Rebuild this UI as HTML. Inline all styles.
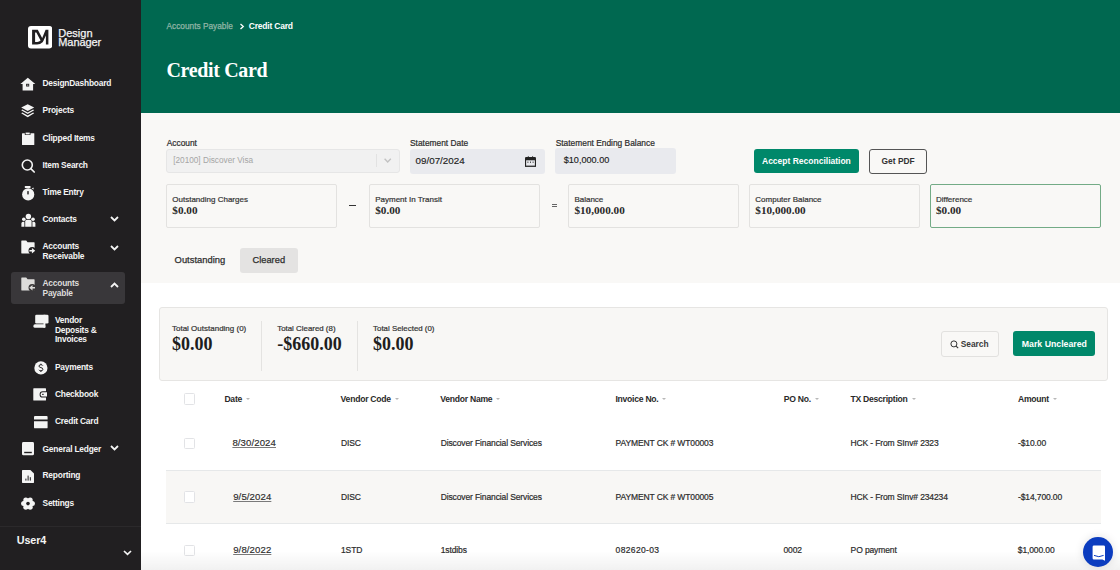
<!DOCTYPE html>
<html><head><meta charset="utf-8">
<style>
*{box-sizing:border-box;margin:0;padding:0}
html,body{width:1120px;height:570px;overflow:hidden;background:#fff;font-family:"Liberation Sans",sans-serif}
.a{position:absolute;white-space:nowrap;line-height:1}
.sb{position:absolute;left:0;top:0;width:141px;height:570px;background:#211f21}
.nav{position:absolute;left:42.5px;color:#f4f4f4;font-weight:700;font-size:8.4px;letter-spacing:-0.2px;line-height:9.6px;white-space:nowrap}
.ic{position:absolute;fill:#f4f4f4}
.chev{position:absolute;width:9px;height:6px}
.hdr{position:absolute;left:141px;top:0;width:979px;height:113px;background:#006850}
.main{position:absolute;left:141px;top:113px;width:979px;height:170px;background:#f9f8f6}
.lbl{position:absolute;font-size:8.4px;color:#2b2b2b;line-height:1;white-space:nowrap;-webkit-text-stroke:0.2px #2b2b2b}
.card{position:absolute;top:184px;height:43.5px;border:1px solid #e3e2e0;border-radius:2px;background:#f9f8f6}
.card .t{position:absolute;left:5px;top:10.5px;font-size:8px;color:#333;line-height:1;white-space:nowrap;-webkit-text-stroke:0.2px #333}
.card .v{position:absolute;left:5px;top:19.5px;font-family:"Liberation Serif",serif;font-weight:700;font-size:11.2px;color:#2a2a2a;line-height:1;white-space:nowrap}
.th{position:absolute;top:395px;font-weight:700;font-size:8.6px;letter-spacing:-0.25px;color:#2a2a2a;line-height:1;white-space:nowrap}
.th i{display:inline-block;width:0;height:0;border-left:2.3px solid transparent;border-right:2.3px solid transparent;border-top:2.5px solid #b8b8b8;margin-left:4px;vertical-align:2px}
.cb{position:absolute;left:183.7px;width:11.2px;height:11.6px;border:1px solid #e2e3e6;border-radius:1.5px;background:#fff}
.td{position:absolute;font-size:8.5px;letter-spacing:-0.12px;color:#2b2b2b;line-height:1;white-space:nowrap;-webkit-text-stroke:0.2px #2b2b2b}
.dt{position:absolute;left:232.4px;font-size:9.6px;letter-spacing:0.1px;color:#2b2b2b;-webkit-text-stroke:0.15px #2b2b2b;line-height:1;white-space:nowrap;text-decoration:underline;text-decoration-color:#7a7a7a;text-decoration-thickness:1px;text-underline-offset:0.5px}
</style></head><body>

<!-- SIDEBAR -->
<div class="sb"></div>

<!-- logo -->
<svg class="a" style="left:27.8px;top:26.4px" width="24.3" height="22.5" viewBox="0 0 24.3 22.5">
<rect x="0" y="0" width="24.3" height="22.5" rx="3" fill="#fff"/>
<path fill-rule="evenodd" d="M4.1 3.7 H9.8 L15.3 14.2 L14.2 16.6 Q12.4 18.6 9.2 18.6 H4.1 Z M7.1 6.4 V15.9 H9.2 Q11.2 15.9 12.6 14.5 L8.3 6.4 Z" fill="#211f21"/>
<path d="M17.6 3.7 H20.4 V18.6 H17.9 V9.4 L14.6 16.6 L13.3 14.3 Z" fill="#211f21"/>
</svg>
<div class="a" style="left:58.3px;top:28px;color:#f4f4f4;font-size:11px;letter-spacing:0px;-webkit-text-stroke:0.25px #f4f4f4">Design</div>
<div class="a" style="left:58.3px;top:37px;color:#f4f4f4;font-size:11px;letter-spacing:-0.1px;-webkit-text-stroke:0.25px #f4f4f4">Manager</div>

<!-- nav icons -->
<svg class="ic" style="left:20px;top:77px" width="16" height="14" viewBox="0 0 16 14"><path d="M7.8 0.7 L15.3 7 H13.1 V13.6 H2.6 V7 H0.4 Z" fill="#f4f4f4"/><rect x="6.1" y="6.8" width="3.1" height="2.7" fill="#211f21"/><rect x="6.9" y="7.6" width="1.5" height="1.1" fill="#aaa"/></svg>
<div class="nav" style="top:79px">DesignDashboard</div>

<svg class="ic" style="left:21px;top:104px" width="14" height="14" viewBox="0 0 14 14"><path d="M6.7 0.2 L13.2 3.6 L6.7 7 L0.2 3.6 Z"/><path d="M1.3 5.6 L6.7 8.5 L12.1 5.6 L13.2 6.3 L6.7 9.9 L0.2 6.3 Z"/><path d="M1.3 8.6 L6.7 11.5 L12.1 8.6 L13.2 9.3 L6.7 13.2 L0.2 9.3 Z"/></svg>
<div class="nav" style="top:106px">Projects</div>

<svg class="ic" style="left:22px;top:132px" width="13" height="14" viewBox="0 0 13 14"><path d="M0 1.8 Q0 1.3 0.5 1.3 H12 Q12.3 1.3 12.3 1.8 V12.6 Q12.3 13.1 11.8 13.1 H0.5 Q0 13.1 0 12.6 Z"/><rect x="2.8" y="0.5" width="5.7" height="2.6" rx="0.6" fill="#211f21"/><rect x="3.6" y="0.6" width="4.1" height="1.8" fill="#f4f4f4"/></svg>
<div class="nav" style="top:134px">Clipped Items</div>

<svg style="position:absolute;left:20px;top:158px" width="16" height="16" viewBox="0 0 16 16"><circle cx="7.3" cy="7" r="5" fill="none" stroke="#f4f4f4" stroke-width="1.6"/><path d="M10.8 10.6 L14.2 14" stroke="#f4f4f4" stroke-width="1.7" stroke-linecap="round"/></svg>
<div class="nav" style="top:161px">Item Search</div>

<svg class="ic" style="left:21px;top:185px" width="14" height="16" viewBox="0 0 14 16"><circle cx="7.2" cy="9.4" r="6.1"/><rect x="3.8" y="1" width="5.7" height="2" rx="0.5"/><path d="M10.6 3.4 L12.4 2.6 L12.8 4.6 Z"/><rect x="6.1" y="6.1" width="1.8" height="3.3" fill="#211f21" opacity="0.8"/></svg>
<div class="nav" style="top:188px">Time Entry</div>

<svg class="ic" style="left:20.5px;top:213px" width="15" height="15" viewBox="0 0 15 15"><circle cx="7.4" cy="3.4" r="2.7"/><path d="M4.2 8.6 Q4.2 6.8 6 6.8 H8.8 Q10.6 6.8 10.6 8.6 V13.8 H4.2 Z"/><circle cx="2.8" cy="6.3" r="1.8"/><circle cx="12" cy="6.3" r="1.8"/><path d="M0.4 10.4 Q0.4 8.7 2 8.7 H3.4 V13.8 H0.4 Z"/><path d="M11.4 8.7 H12.8 Q14.4 8.7 14.4 10.4 V13.8 H11.4 Z"/></svg>
<div class="nav" style="top:215px">Contacts</div>

<svg class="ic" style="left:20.5px;top:240px" width="15" height="15" viewBox="0 0 15 15"><path d="M0.3 1 Q0.3 0.6 0.7 0.6 H5.2 L6.6 2.2 H13 Q13.6 2.2 13.6 2.8 V13 Q13.6 13.4 13.2 13.4 H0.7 Q0.3 13.4 0.3 13 Z"/><circle cx="11.2" cy="10.8" r="3.7" fill="#211f21"/><path d="M8.4 10.1 H10.9 V8 L14.2 10.8 L10.9 13.6 V11.5 H8.4 Z" fill="#f4f4f4"/></svg>
<div class="nav" style="top:242px">Accounts<br>Receivable</div>

<!-- AP active -->
<div class="a" style="left:11px;top:272.3px;width:114px;height:31.5px;background:#39373a;border-radius:3px"></div>
<svg class="ic" style="left:20.5px;top:277px;fill:#dedddb" width="15" height="15" viewBox="0 0 15 15"><path d="M0.3 1 Q0.3 0.6 0.7 0.6 H5.2 L6.6 2.2 H13 Q13.6 2.2 13.6 2.8 V13 Q13.6 13.4 13.2 13.4 H0.7 Q0.3 13.4 0.3 13 Z"/><circle cx="11.2" cy="10.8" r="3.7" fill="#3b393a"/><path d="M14 10.1 H11.5 V8 L8.2 10.8 L11.5 13.6 V11.5 H14 Z" fill="#dedddb"/></svg>
<div class="nav" style="top:279px;color:#dedddb">Accounts<br>Payable</div>

<svg class="ic" style="left:32.5px;top:313.5px" width="16" height="15" viewBox="0 0 16 15"><rect x="2.2" y="0.8" width="13.3" height="8.8" rx="1.3"/><rect x="10.5" y="0.8" width="1.9" height="13"/><rect x="0.4" y="10.3" width="11.9" height="3.5" rx="1.6"/></svg>
<div class="nav" style="left:54.9px;top:316px">Vendor<br>Deposits &amp;<br>Invoices</div>

<svg class="ic" style="left:33.5px;top:361px" width="14" height="14" viewBox="0 0 14 14"><circle cx="6.9" cy="6.9" r="6.6"/><path d="M8.8 4.6 Q8.4 3.7 6.9 3.7 Q5 3.7 5 5.1 Q5 6.3 6.9 6.6 Q8.9 6.9 8.9 8.3 Q8.9 9.8 6.9 9.8 Q5.3 9.8 4.9 8.8 M6.9 2.7 V3.7 M6.9 9.8 V11" stroke="#211f21" stroke-width="1" fill="none"/></svg>
<div class="nav" style="left:54.9px;top:363px">Payments</div>

<svg class="ic" style="left:33px;top:388.3px" width="15" height="13" viewBox="0 0 15 13"><path d="M0.3 0.8 Q0.3 0.3 0.8 0.3 H12.4 Q13 0.3 13 0.8 V3.2 H9.6 Q6.6 3.2 6.6 6.4 Q6.6 9.6 9.6 9.6 H13 V12 Q13 12.6 12.4 12.6 H0.8 Q0.3 12.6 0.3 12 Z"/><path d="M9.6 4.2 H14 V8.6 H9.6 Q7.6 8.6 7.6 6.4 Q7.6 4.2 9.6 4.2 Z"/><rect x="9.2" y="5.8" width="1.4" height="1.2" fill="#211f21"/></svg>
<div class="nav" style="left:54.9px;top:390px">Checkbook</div>

<svg class="ic" style="left:33.5px;top:415.8px" width="14" height="13" viewBox="0 0 14 13"><path d="M0 1 Q0 0 1 0 H12.6 Q13.6 0 13.6 1 V3.4 H0 Z"/><path d="M0 5.2 H13.6 V11.4 Q13.6 12.3 12.6 12.3 H1 Q0 12.3 0 11.4 Z"/></svg>
<div class="nav" style="left:54.9px;top:417px">Credit Card</div>

<svg class="ic" style="left:22px;top:442.3px" width="13" height="14" viewBox="0 0 13 14"><path d="M0 1.4 Q0 0 1.4 0 H10.6 Q12 0 12 1.4 V11.8 Q12 13.3 10.6 13.3 H1.4 Q0 13.3 0 11.8 Z"/><rect x="2.2" y="9.8" width="7.6" height="1.4" fill="#211f21"/></svg>
<div class="nav" style="top:445px">General Ledger</div>

<svg class="ic" style="left:22px;top:469.7px" width="13" height="14" viewBox="0 0 13 14"><path d="M0 0.6 Q0 0 0.6 0 H8.4 L12 3.6 V12.3 Q12 12.9 11.4 12.9 H0.6 Q0 12.9 0 12.3 Z"/><rect x="3.4" y="8.6" width="1" height="2" fill="#211f21"/><rect x="5.6" y="5.6" width="1" height="5" fill="#211f21"/><rect x="7.8" y="7.2" width="1" height="3.4" fill="#211f21"/></svg>
<div class="nav" style="top:471px">Reporting</div>

<svg class="ic" style="left:20.9px;top:496.7px" width="14" height="14" viewBox="0 0 14 14"><circle cx="7" cy="6.6" r="5"/><circle cx="11.40" cy="6.60" r="2.5"/><circle cx="9.20" cy="10.24" r="2.5"/><circle cx="4.80" cy="10.24" r="2.5"/><circle cx="2.60" cy="6.60" r="2.5"/><circle cx="4.80" cy="2.96" r="2.5"/><circle cx="9.20" cy="2.96" r="2.5"/><circle cx="7" cy="6.6" r="1.8" fill="#211f21"/></svg>
<div class="nav" style="top:499px">Settings</div>

<!-- chevrons -->
<svg class="chev" style="left:110px;top:216px" viewBox="0 0 9 6"><path d="M1 1 L4.5 4.4 L8 1" stroke="#f4f4f4" stroke-width="1.8" fill="none"/></svg>
<svg class="chev" style="left:110px;top:244.6px" viewBox="0 0 9 6"><path d="M1 1 L4.5 4.4 L8 1" stroke="#f4f4f4" stroke-width="1.8" fill="none"/></svg>
<svg class="chev" style="left:110px;top:282px" viewBox="0 0 9 6"><path d="M1 5 L4.5 1.6 L8 5" stroke="#f4f4f4" stroke-width="1.8" fill="none"/></svg>
<svg class="chev" style="left:110.3px;top:445.3px" viewBox="0 0 9 6"><path d="M1 1 L4.5 4.4 L8 1" stroke="#f4f4f4" stroke-width="1.8" fill="none"/></svg>

<div class="a" style="left:0;top:526.3px;width:141px;height:1px;background:#2b292b"></div>
<div class="a" style="left:16.7px;top:535.2px;color:#f4f4f4;font-weight:700;font-size:10.8px;letter-spacing:-0.1px">User4</div>
<svg class="chev" style="left:122.8px;top:549.6px" viewBox="0 0 9 6"><path d="M1 1 L4.5 4.4 L8 1" stroke="#f4f4f4" stroke-width="1.7" fill="none"/></svg>

<!-- HEADER -->
<div class="hdr"></div>
<div class="main"></div>

<!-- breadcrumb -->
<div class="a" style="left:166.5px;top:22.4px;font-size:8.3px;color:#90b5a5;-webkit-text-stroke:0.25px #90b5a5">Accounts Payable</div>
<svg class="a" style="left:238.6px;top:22.6px" width="6" height="7" viewBox="0 0 6 7"><path d="M1.5 0.9 L4.3 3.5 L1.5 6.1" stroke="#fff" stroke-width="1.3" fill="none"/></svg>
<div class="a" style="left:248.7px;top:22.4px;font-size:8.5px;font-weight:700;letter-spacing:-0.2px;color:#fff">Credit Card</div>
<div class="a" style="left:166.5px;top:59.5px;font-family:'Liberation Serif',serif;font-weight:700;font-size:20px;letter-spacing:-0.35px;color:#fff">Credit Card</div>

<!-- form row -->
<div class="lbl" style="left:166.7px;top:139.4px">Account</div>
<div class="a" style="left:166px;top:148.5px;width:234px;height:24px;background:#f1f1f1;border:1px solid #e6e6e6;border-radius:3px"></div>
<div class="a" style="left:173.2px;top:156.8px;font-size:8.24px;color:#a5a5a5">[20100] Discover Visa</div>
<div class="a" style="left:376.2px;top:154px;width:1px;height:12.6px;background:#e2e2e2"></div>
<svg class="a" style="left:384px;top:158.3px" width="8" height="5" viewBox="0 0 8 5"><path d="M0.6 0.7 L3.7 3.9 L6.8 0.7" stroke="#c2c2c2" stroke-width="1.4" fill="none"/></svg>

<div class="lbl" style="left:410px;top:139.3px">Statement Date</div>
<div class="a" style="left:410px;top:148.75px;width:135px;height:25px;background:#e9eaee;border-radius:3px"></div>
<div class="a" style="left:415.6px;top:156.3px;font-size:9.8px;color:#222;-webkit-text-stroke:0.15px #222">09/07/2024</div>
<svg class="a" style="left:524.6px;top:155.6px" width="11" height="11.4" viewBox="0 0 11 11.4"><rect x="0.55" y="1.6" width="9.9" height="9.2" rx="0.9" fill="none" stroke="#222" stroke-width="1.1"/><rect x="0.5" y="1.5" width="10" height="2.8" fill="#222"/><rect x="2.8" y="0.3" width="1" height="1.6" fill="#222"/><rect x="7.1" y="0.3" width="1" height="1.6" fill="#222"/><rect x="2.4" y="5.6" width="1" height="1.2" fill="#333"/><rect x="5" y="5.6" width="1" height="1.2" fill="#333"/><rect x="7.6" y="5.6" width="1" height="1.2" fill="#333"/><rect x="0.5" y="9.6" width="10" height="1.2" fill="#333"/></svg>

<div class="lbl" style="left:555.7px;top:138.9px">Statement Ending Balance</div>
<div class="a" style="left:555.4px;top:147.9px;width:120.5px;height:25.9px;background:#e9eaee;border-radius:3px"></div>
<div class="a" style="left:563.75px;top:156.2px;font-size:9.1px;color:#222;-webkit-text-stroke:0.15px #222">$10,000.00</div>

<div class="a" style="left:753.5px;top:148.8px;width:105.7px;height:24.6px;background:#00886a;border-radius:3px"></div>
<div class="a" style="left:762px;top:157.4px;font-size:8.5px;font-weight:700;color:#fff">Accept Reconciliation</div>
<div class="a" style="left:869.3px;top:148.5px;width:57.7px;height:25px;border:1px solid #555;border-radius:3px"></div>
<div class="a" style="left:881.6px;top:156.7px;font-size:8.4px;font-weight:700;color:#333">Get PDF</div>

<!-- cards -->
<div class="card" style="left:166.3px;width:170.5px"><div class="t">Outstanding Charges</div><div class="v">$0.00</div></div>
<div class="a" style="left:349.1px;top:204.6px;width:7.4px;height:1.1px;background:#333"></div>
<div class="card" style="left:369.2px;width:170.5px"><div class="t">Payment In Transit</div><div class="v">$0.00</div></div>
<div class="a" style="left:551.6px;top:204.1px;width:5px;height:0.9px;background:#666"></div>
<div class="a" style="left:551.6px;top:206.1px;width:5px;height:0.9px;background:#666"></div>
<div class="card" style="left:568.4px;width:170.4px"><div class="t">Balance</div><div class="v">$10,000.00</div></div>
<div class="card" style="left:749.3px;width:170.3px"><div class="t">Computer Balance</div><div class="v">$10,000.00</div></div>
<div class="card" style="left:930px;width:170.8px;border:1.2px solid #73ab86"><div class="t">Difference</div><div class="v">$0.00</div></div>

<!-- tabs -->
<div class="a" style="left:174.6px;top:254.9px;font-size:9.4px;color:#2e2e2e;-webkit-text-stroke:0.25px #2e2e2e">Outstanding</div>
<div class="a" style="left:240px;top:247.9px;width:57.5px;height:24.9px;background:#e4e3e2;border-radius:3px"></div>
<div class="a" style="left:252.5px;top:256.2px;font-size:9.3px;color:#2e2e2e;-webkit-text-stroke:0.25px #2e2e2e">Cleared</div>

<!-- summary panel -->
<div class="a" style="left:158.6px;top:307px;width:949.8px;height:73.7px;background:#f8f7f5;border:1px solid #e6e5e3;border-radius:3px"></div>
<div class="a" style="left:172px;top:325.2px;font-size:8px;color:#333;-webkit-text-stroke:0.2px #333">Total Outstanding (0)</div>
<div class="a" style="left:172px;top:334.8px;font-family:'Liberation Serif',serif;font-weight:700;font-size:18px;color:#1e1e1e">$0.00</div>
<div class="a" style="left:261.2px;top:321.3px;width:1px;height:50px;background:#e4e3e1"></div>
<div class="a" style="left:277.2px;top:325.2px;font-size:7.9px;color:#333;-webkit-text-stroke:0.2px #333">Total Cleared (8)</div>
<div class="a" style="left:277.2px;top:334.8px;font-family:'Liberation Serif',serif;font-weight:700;font-size:18px;color:#1e1e1e">-$660.00</div>
<div class="a" style="left:357.4px;top:321.3px;width:1px;height:50px;background:#e4e3e1"></div>
<div class="a" style="left:373.1px;top:325.2px;font-size:7.9px;color:#333;-webkit-text-stroke:0.2px #333">Total Selected (0)</div>
<div class="a" style="left:373.1px;top:334.8px;font-family:'Liberation Serif',serif;font-weight:700;font-size:18px;color:#1e1e1e">$0.00</div>

<div class="a" style="left:940.5px;top:331.25px;width:58.1px;height:25.35px;background:#f9f8f6;border:1px solid #e2e1df;border-radius:3px"></div>
<svg class="a" style="left:950px;top:339.6px" width="9" height="9" viewBox="0 0 9 9"><circle cx="3.9" cy="3.9" r="3" fill="none" stroke="#333" stroke-width="1"/><path d="M6.1 6.1 L8.2 8.2" stroke="#333" stroke-width="1.1"/></svg>
<div class="a" style="left:960.7px;top:340px;font-size:8.4px;font-weight:700;color:#3a3a3a">Search</div>
<div class="a" style="left:1013.4px;top:331.25px;width:81.6px;height:24.75px;background:#00886a;border-radius:3px"></div>
<div class="a" style="left:1021.8px;top:339.7px;font-size:8.75px;font-weight:700;color:#fff">Mark Uncleared</div>

<!-- table header -->
<div class="cb" style="top:393.2px"></div>
<div class="th" style="left:224.4px">Date<i></i></div>
<div class="th" style="left:340.6px">Vendor Code<i></i></div>
<div class="th" style="left:440.2px">Vendor Name<i></i></div>
<div class="th" style="left:615.4px">Invoice No.<i></i></div>
<div class="th" style="left:783.7px">PO No.<i></i></div>
<div class="th" style="left:850.4px">TX Description<i></i></div>
<div class="th" style="left:1018px">Amount<i></i></div>

<!-- rows -->
<div class="a" style="left:166px;top:470px;width:935px;height:54.2px;background:#f8f7f5;border-top:1px solid #e6e8e9;border-bottom:1px solid #e6e8e9"></div>

<div class="cb" style="top:437.9px"></div>
<div class="dt" style="top:438.4px">8/30/2024</div>
<div class="td" style="left:341px;top:439px">DISC</div>
<div class="td" style="left:440.7px;top:439px">Discover Financial Services</div>
<div class="td" style="left:615.6px;top:439px">PAYMENT CK # WT00003</div>
<div class="td" style="left:850.4px;top:439px">HCK - From SInv# 2323</div>
<div class="td" style="left:1018px;top:439px">-$10.00</div>

<div class="cb" style="top:491.2px"></div>
<div class="dt" style="top:492px;left:233.2px">9/5/2024</div>
<div class="td" style="left:341px;top:493px">DISC</div>
<div class="td" style="left:440.7px;top:493px">Discover Financial Services</div>
<div class="td" style="left:615.6px;top:493px">PAYMENT CK # WT00005</div>
<div class="td" style="left:850.4px;top:493px">HCK - From SInv# 234234</div>
<div class="td" style="left:1018px;top:493px">-$14,700.00</div>

<div class="cb" style="top:544.5px"></div>
<div class="dt" style="top:545px;left:233.2px">9/8/2022</div>
<div class="td" style="left:341px;top:546px">1STD</div>
<div class="td" style="left:440.7px;top:546px">1stdibs</div>
<div class="td" style="left:615.6px;top:546px;letter-spacing:0.35px">082620-03</div>
<div class="td" style="left:783.5px;top:546px">0002</div>
<div class="td" style="left:850.6px;top:546px">PO payment</div>
<div class="td" style="left:1017.8px;top:546px">$1,000.00</div>

<!-- bottom fade -->
<div class="a" style="left:141px;top:551px;width:979px;height:19px;background:linear-gradient(rgba(0,0,0,0),rgba(0,0,0,0.055))"></div>

<!-- chat widget -->
<div class="a" style="left:1083.2px;top:537px;width:30.2px;height:30.2px;border-radius:50%;background:#0b3cbf;box-shadow:0 0 10px rgba(0,0,0,0.12)"></div>
<svg class="a" style="left:1091.5px;top:544.5px" width="14" height="17" viewBox="0 0 14 17"><path d="M0.6 1.8 Q0.6 0.4 2 0.4 H11.6 Q13 0.4 13 1.8 V15.8 L10.4 14.6 H2 Q0.6 14.6 0.6 13.2 Z" fill="#fff"/><path d="M2 10.4 Q6.8 13 11.6 10.4" stroke="#0b3cbf" stroke-width="1" fill="none"/></svg>

</body></html>
